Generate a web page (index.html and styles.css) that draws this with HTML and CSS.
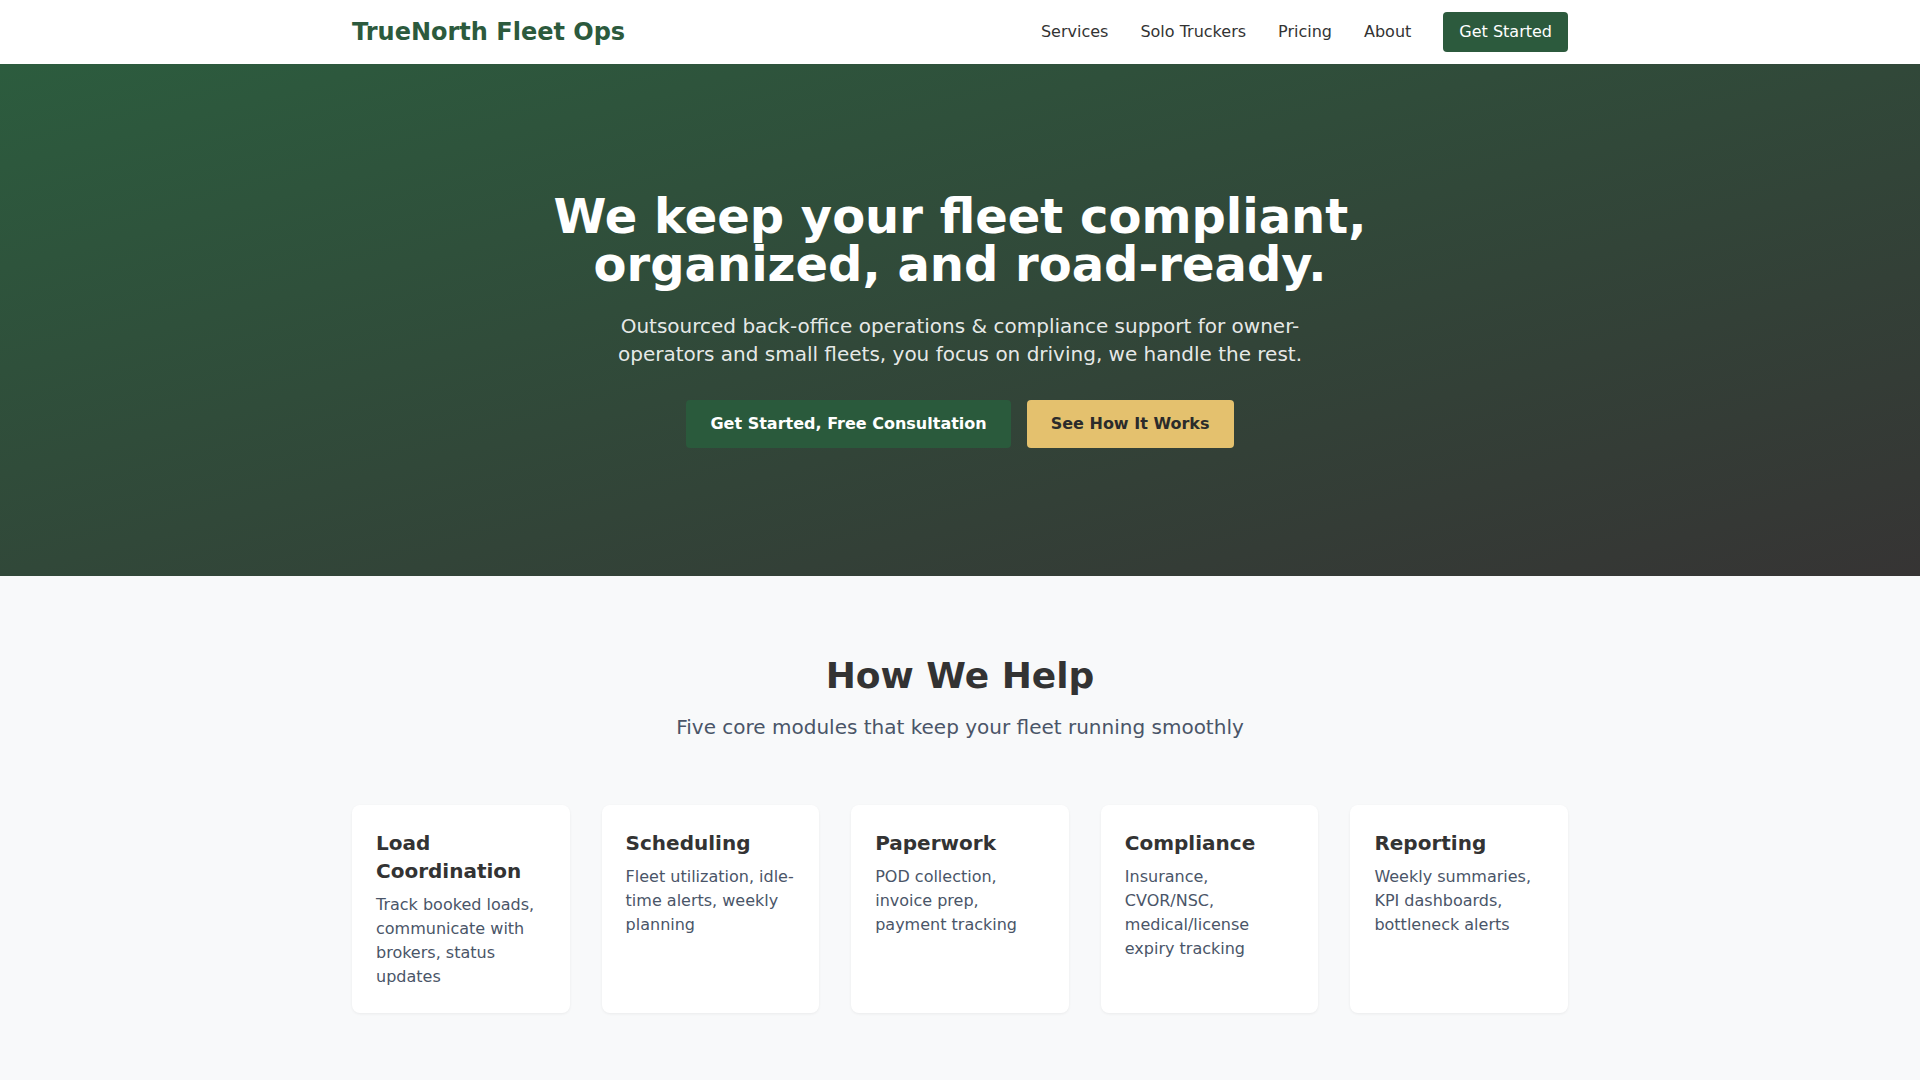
FILE: index.html
```html
<!DOCTYPE html>
<html lang="en">
<head>
  <meta charset="UTF-8">
  <meta name="viewport" content="width=device-width, initial-scale=1.0">
  <title>TrueNorth Fleet Ops</title>
  <link rel="stylesheet" href="styles.css">
</head>
<body>

  <header class="site-header">
    <div class="container nav">
      <a href="#" class="logo">TrueNorth Fleet Ops</a>
      <nav class="nav-links">
        <a href="#services">Services</a>
        <a href="#solo">Solo Truckers</a>
        <a href="#pricing">Pricing</a>
        <a href="#about">About</a>
        <a href="#contact" class="nav-cta">Get Started</a>
      </nav>
    </div>
  </header>

  <section class="hero">
    <div class="hero-inner">
      <h1>We keep your fleet compliant, organized, and road-ready.</h1>
      <p class="hero-sub">Outsourced back-office operations &amp; compliance support for owner-operators and small fleets, you focus on driving, we handle the rest.</p>
      <div class="hero-buttons">
        <a href="#contact" class="btn btn-primary">Get Started, Free Consultation</a>
        <a href="#services" class="btn btn-gold">See How It Works</a>
      </div>
    </div>
  </section>

  <section id="services" class="help">
    <div class="container">
      <h2 class="section-title">How We Help</h2>
      <p class="section-sub">Five core modules that keep your fleet running smoothly</p>

      <div class="cards">
        <div class="card">
          <h3>Load Coordination</h3>
          <p>Track booked loads, communicate with brokers, status updates</p>
        </div>
        <div class="card">
          <h3>Scheduling</h3>
          <p>Fleet utilization, idle-time alerts, weekly planning</p>
        </div>
        <div class="card">
          <h3>Paperwork</h3>
          <p>POD collection, invoice prep, payment tracking</p>
        </div>
        <div class="card">
          <h3>Compliance</h3>
          <p>Insurance, CVOR/NSC, medical/license expiry tracking</p>
        </div>
        <div class="card">
          <h3>Reporting</h3>
          <p>Weekly summaries, KPI dashboards, bottleneck alerts</p>
        </div>
      </div>
    </div>
  </section>

</body>
</html>
```

FILE: styles.css
```css
* {
  box-sizing: border-box;
}

body {
  font-family: "DejaVu Sans", Verdana, sans-serif;
  margin: 0;
  padding: 0;
  background-color: #f8f9fa;
  color: #333;
  line-height: 1.6;
}

a {
  text-decoration: none;
}

.container {
  max-width: 1280px;
  margin: 0 auto;
  padding: 0 32px;
}

/* header */

.site-header {
  background-color: #fff;
}

.nav {
  height: 64px;
  display: flex;
  align-items: center;
  justify-content: space-between;
}

.logo {
  font-size: 24px;
  font-weight: bold;
  color: #2c5a3d;
}

.nav-links {
  display: flex;
  align-items: center;
  gap: 32px;
}

.nav-links a {
  color: #333;
  font-size: 16px;
  line-height: 1.5;
}

.nav-links .nav-cta {
  background-color: #2c5a3d;
  color: #fff;
  padding: 8px 16px;
  border-radius: 4px;
}

/* hero */

.hero {
  background: linear-gradient(to bottom right, #2c5c3e 0%, #363434 100%);
  color: #fff;
  text-align: center;
  padding: 128px 32px;
}

.hero-inner {
  max-width: 900px;
  margin: 0 auto;
}

.hero h1 {
  font-size: 48px;
  line-height: 1;
  margin: 0 0 24px;
}

.hero-sub {
  font-size: 20px;
  line-height: 1.4;
  max-width: 700px;
  margin: 0 auto 32px;
  color: rgba(255, 255, 255, 0.9);
}

.hero-buttons {
  display: flex;
  justify-content: center;
  gap: 16px;
}

.btn {
  display: inline-block;
  padding: 12px 24px;
  font-size: 16px;
  line-height: 1.5;
  font-weight: bold;
  border-radius: 4px;
}

.btn-primary {
  background-color: #2a5a3c;
  color: #fff;
}

.btn-gold {
  background-color: #e4c16e;
  color: #2b2b2b;
}

/* how we help */

.help {
  padding: 78px 0 80px;
}

.section-title {
  text-align: center;
  font-size: 36px;
  line-height: 1.2;
  margin: 0 0 14px;
  color: #333;
}

.section-sub {
  text-align: center;
  font-size: 20px;
  color: #4a5568;
  margin: 0 0 62px;
}

.cards {
  display: grid;
  grid-template-columns: repeat(5, 1fr);
  gap: 32px;
}

.card {
  background-color: #fff;
  border-radius: 8px;
  padding: 24px;
  box-shadow: 0 1px 3px rgba(0, 0, 0, 0.06);
}

.card h3 {
  font-size: 20px;
  line-height: 1.4;
  margin: 0 0 8px;
  color: #333;
}

.card p {
  font-size: 16px;
  line-height: 1.5;
  margin: 0;
  color: #4a5568;
}
```
